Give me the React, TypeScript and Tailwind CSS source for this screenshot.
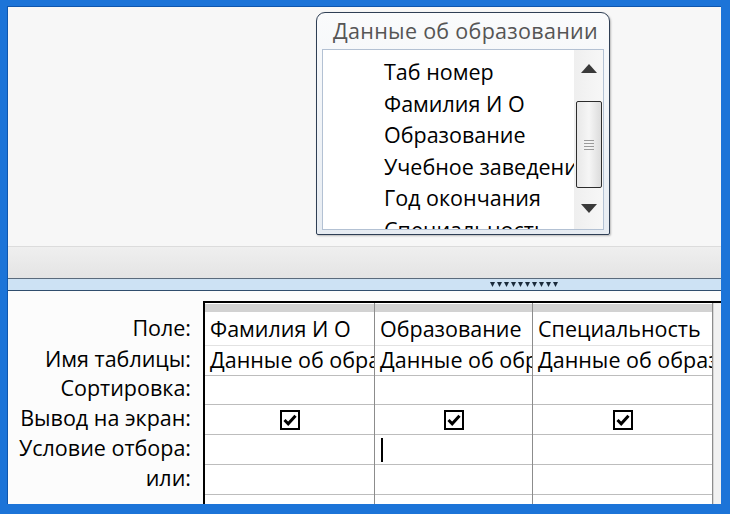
import React from 'react';

const font = { fontFamily: '"Open Sans", "Noto Sans", sans-serif' };

const listItems = ['Таб номер', 'Фамилия И О', 'Образование', 'Учебное заведение', 'Год окончания', 'Специальность'];

const labels = [
    { text: 'Поле:', h: 'h-[32px]' },
    { text: 'Имя таблицы:', h: 'h-[30px]' },
    { text: 'Сортировка:', h: 'h-[29px]' },
    { text: 'Вывод на экран:', h: 'h-[30px]' },
    { text: 'Условие отбора:', h: 'h-[30px]' },
    { text: 'или:', h: 'h-[30px]' },
];

const columns = [
    { w: 'w-[170px]', field: 'Фамилия И О', table: 'Данные об образовании', caret: false },
    { w: 'w-[158px]', field: 'Образование', table: 'Данные об образовании', caret: true },
    { w: 'w-[180px]', field: 'Специальность', table: 'Данные об образовании', caret: false },
];

const Check = () => (
    <div className="w-[20px] h-[20px] border-2 border-black bg-white flex items-center justify-center">
        <svg width="14" height="12" viewBox="0 0 14 12">
            <path d="M1.5 6 L5.2 9.8 L12.5 1.8" fill="none" stroke="#000" strokeWidth="3" />
        </svg>
    </div>
);

const Column = ({ w, field, table, caret }: { w: string; field: string; table: string; caret: boolean }) => (
    <div className={`${w} flex flex-col border-r border-[#8c8c8c] shrink-0`}>
        <div className="h-[11px] pt-[1px] pb-[2px]">
            <div className="h-full bg-[#d2d2d2]"></div>
        </div>
        <div className="h-[32px] flex items-center px-[5px] overflow-hidden whitespace-nowrap border-b border-[#e2e2e2]">{field}</div>
        <div className="h-[30px] flex items-center px-[5px] overflow-hidden whitespace-nowrap border-b border-[#bdbdbd]">{table}</div>
        <div className="h-[29px] border-b border-[#bdbdbd]"></div>
        <div className="h-[30px] flex items-center justify-center border-b border-[#bdbdbd]">
            <Check />
        </div>
        <div className="h-[30px] flex items-center px-[6px] border-b border-[#bdbdbd]">
            {caret && <div className="w-[2px] h-[24px] bg-black"></div>}
        </div>
        <div className="h-[30px] border-b border-[#bdbdbd]"></div>
        <div className="flex-1"></div>
    </div>
);

const App: React.FC = () => {
    return (
        <div className="w-[730px] h-[514px] bg-[#1c74d8] pl-[7px] pt-[6px] pr-[9px] pb-[10px] overflow-hidden" style={font}>
            <div className="w-full h-full flex flex-col bg-white border-l border-t border-[#0f56ad]">
                {/* Upper pane with table list */}
                <div className="h-[240px] shrink-0 bg-[#f7f7f7] border-b border-[#dcdcdc] pl-[308px] pt-[5px]">
                    <div className="w-[294px] h-[223px] border border-[#2f3f55] rounded-t-[9px] rounded-b-[2px] bg-gradient-to-b from-[#fafbfc] to-[#e7ecf2] flex flex-col shadow-[1px_1px_2px_rgba(0,0,0,0.25)]">
                        <div className="h-[36px] pl-[16px] pt-[5px] text-[21.5px] tracking-[0.3px] leading-[26px] text-[#555] whitespace-nowrap overflow-hidden">
                            Данные об образовании
                        </div>
                        <div className="flex-1 mx-[5px] mb-[4px] border border-[#b3c1d3] bg-white flex overflow-hidden">
                            <div className="flex-1 pl-[61px] pt-[6px] overflow-hidden text-[21.5px] leading-[31.5px] text-black whitespace-nowrap">
                                {listItems.map(item => (
                                    <div key={item}>{item}</div>
                                ))}
                            </div>
                            <div className="w-[29px] shrink-0 bg-gradient-to-r from-[#efefef] to-[#f7f7f7] flex flex-col items-center">
                                <div className="h-[36px] flex items-center justify-center">
                                    <svg width="16" height="9" viewBox="0 0 16 9"><path d="M8 0 L16 9 L0 9 Z" fill="#3a3a3a" /></svg>
                                </div>
                                <div className="w-[26px] h-[87px] mt-[15px] border border-[#2d2d2d] rounded-[2px] bg-gradient-to-r from-[#e8e8e8] via-[#f6f6f6] to-[#dcdcdc] flex items-center justify-center">
                                    <div className="flex flex-col gap-[2px]">
                                        <div className="w-[10px] h-[1px] bg-[#9a9a9a]"></div>
                                        <div className="w-[10px] h-[1px] bg-[#9a9a9a]"></div>
                                        <div className="w-[10px] h-[1px] bg-[#9a9a9a]"></div>
                                        <div className="w-[10px] h-[1px] bg-[#9a9a9a]"></div>
                                    </div>
                                </div>
                                <div className="flex-1 flex items-center justify-center">
                                    <svg width="16" height="9" viewBox="0 0 16 9"><path d="M0 0 L16 0 L8 9 Z" fill="#3a3a3a" /></svg>
                                </div>
                            </div>
                        </div>
                    </div>
                </div>

                {/* Splitter */}
                <div className="h-[32px] shrink-0 bg-gradient-to-b from-[#efefef] to-[#e4e4e4] border-b border-[#5b6b7c]"></div>
                <div className="h-[12px] shrink-0 bg-[#cde2f4] border-b border-[#304d6d] flex items-center pl-[482px]">
                    <svg width="72" height="6" viewBox="0 0 72 6">
                        {Array.from({ length: 10 }).map((_, i) => (
                            <path key={i} d={`M${i * 7} 0 L${i * 7 + 5} 0 L${i * 7 + 2.5} 5 Z`} fill="#1b2b3b" />
                        ))}
                    </svg>
                </div>

                {/* Query grid */}
                <div className="flex-1 flex bg-[#fcfcfc] pt-[10px] text-[21.5px] text-black">
                    <div className="w-[195px] shrink-0 pt-[11px] pr-[12px] flex flex-col items-end">
                        {labels.map(l => (
                            <div key={l.text} className={`${l.h} flex items-center whitespace-nowrap`}>{l.text}</div>
                        ))}
                    </div>
                    <div className="flex-1 flex border-l-2 border-t-2 border-black bg-white">
                        {columns.map(c => (
                            <Column key={c.field} {...c} />
                        ))}
                        <div className="flex-1 bg-[#f1f1f1] border-l border-[#d6d6d6]"></div>
                    </div>
                </div>
            </div>
        </div>
    );
};

export default App;
